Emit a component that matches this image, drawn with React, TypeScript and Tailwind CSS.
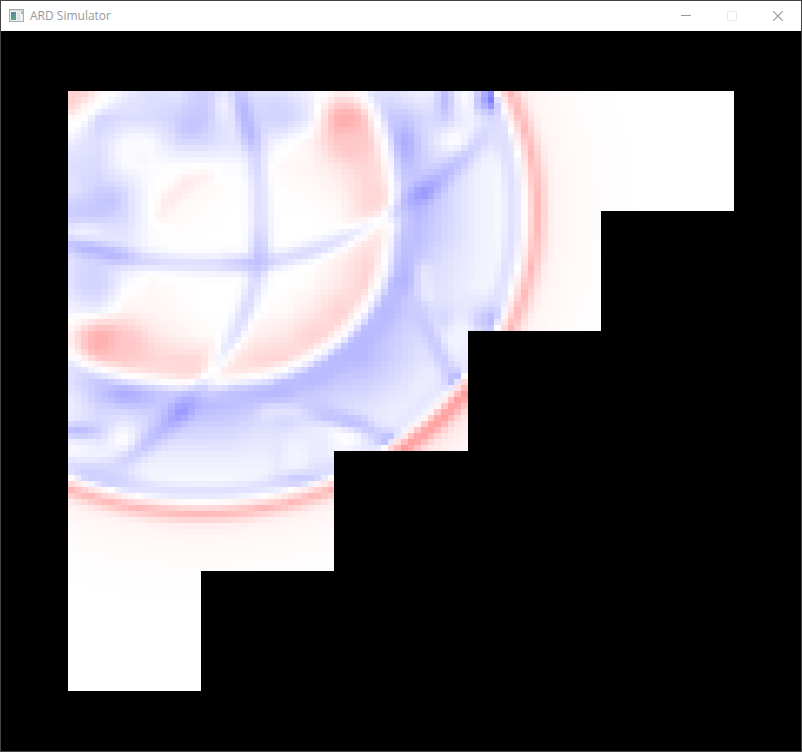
import React from "react";

const CELLS = 100;
const BLOCK = 20;

type Point = [number, number, number];
type Table = { u0: number; v0: number; rows: number[][] };

// Pressure behind the reflected front, sampled every four cells (percent; red > 0 > blue).
const inner: Table = {
  u0: 0,
  v0: 0,
  rows: [
    [16, 3, -8, -13, -11, -20, -9, -11, -10, -5, 6, 5, 0],
    [3, -17, -13, -14, -18, -20, -9, -14, -17, -6, 24, 17, 5],
    [-6, -14, -5, -4, -13, -14, -10, -9, -2, 5, 19, 18, 8],
    [-13, -15, -9, -1, -1, -1, -2, 0, 3, 4, 9, 16, 10],
    [-14, -18, -13, -1, 3, 2, 1, 0, 1, 2, 5, 14, 12],
    [-16, -20, -13, -1, 3, 1, 0, 0, 0, 0, 2, 12, 12],
    [-8, -12, -16, -3, 1, 0, 0, 0, 0, 0, 1, 9, 12],
    [-8, -12, -16, -3, 1, 0, 0, 0, 0, 1, 6, 15, 12],
    [-8, -12, -16, -3, 1, 0, 0, 0, 0, 2, 9, 17, 12],
    [-8, -12, -16, -3, 1, 0, 0, 1, 2, 8, 17, 14, 12],
    [-8, -12, -16, -3, 1, 0, 0, 8, 10, 17, 14, 12, 12],
    [-8, -12, -16, -3, 1, 0, 0, 16, 16, 14, 12, 12, 12],
  ],
};

// Pressure between the reflected front and the leading front.
const outer: Table = {
  u0: 44,
  v0: 0,
  rows: [
    [-12, -13, -7, -8, -4, -7, -8],
    [-14, -21, -16, -13, -5, -7, -8],
    [-16, -20, -19, -6, -4, -10, -9],
    [-16, -18, -20, -14, -7, -3, -7],
    [-16, -17, -25, -17, -8, -3, -5],
    [-16, -17, -27, -17, -8, -3, -4],
    [-16, -17, -25, -16, -8, -3, -4],
    [-18, -18, -21, -12, -7, -3, -5],
    [-22, -22, -18, -11, -6, -2, -5],
    [-24, -25, -18, -9, -10, -14, -12],
    [-26, -21, -14, -7, -4, -12, -12],
    [-27, -19, -12, -7, -5, -8, -8],
    [-20, -14, -8, -5, -5, -8, -8],
    [-14, -9, -6, -4, -5, -8, -8],
    [-12, -8, -5, -5, -5, -8, -8],
  ],
};

type Stroke = { width: number; alpha: number; points: Point[] };

const strokes: Stroke[] = [
  { width: 1, alpha: 0.9, points: [[6.5, 0, -1], [4, 2.3, 0], [2.3, 4, 0]] },
  { width: 1.4, alpha: 0.85, points: [[20, 0, -19], [19.8, 3, -21], [18.4, 6.2, -24]] },
  { width: 1, alpha: 0.9, points: [[16.6, 16.8, 8], [18.2, 15.2, 9], [20.5, 14.2, 6]] },
  { width: 1.1, alpha: 0.95, points: [[25.2, -1, -19], [26.4, 3, -32], [27.4, 7, -30], [28.2, 11, -17], [28.7, 16, -13], [28.9, 22, -13], [28.7, 28.6, -26]] },
  { width: 1, alpha: 0.9, points: [[28.7, 28.6, -24], [32, 28.1, -15], [36, 26.9, -16], [40, 25.3, -14], [43.5, 23.4, -9], [46, 22, -4], [48.5, 20.5, -3]] },
  { width: 1.2, alpha: 0.9, points: [[50, 20, -22], [52, 18.3, -35], [53.4, 17, -42], [56, 14.5, -30], [58.5, 12, -25], [60.5, 9.8, -21], [62.5, 7.3, -16], [64.2, 5, -13]] },
  { width: 1.1, alpha: 0.9, points: [[50.5, 5, -23], [50.6, 8, -34], [50.8, 10.5, -31], [51, 14, -22]] },
  { width: 1.1, alpha: 0.8, points: [[50.7, 25, -25], [50.6, 31, -31], [49.5, 34, -26]] },
  { width: 1, alpha: 0.8, points: [[53.7, 30, -8], [54, 34, -6]] },
  { width: 1, alpha: 0.95, points: [[51.5, 35.5, -20], [53.5, 39, -21], [55.2, 42.3, -22], [57, 46, -22], [58, 48, -29]] },
];

type Blob = [number, number, number, number, number];

// u, v, radius u, radius v, value
const blobs: Blob[] = [
  [1, 0.5, 1.8, 1.4, 18],
  [23.3, 2.5, 0.9, 2, -6],
  [10.2, 9, 1.8, 1.4, -1],
  [31.3, 3.4, 2.6, 2, -17],
  [41.9, 5.1, 1.9, 2, 33],
  [42.6, 9.2, 1.8, 2, 22],
  [46, 18, 1.4, 1.8, 16],
  [56.6, 1.5, 0.9, 2.4, -27],
  [60, 1, 0.9, 1.5, -2],
  [58, 8.2, 1.3, 1.2, -1],
];

// Wall contacts drawn over the blue rim of the leading front, right of the diagonal.
const rightContacts: Blob[] = [
  [61.8, 1.8, 0.7, 1.6, -22],
  [63.4, 1.3, 0.8, 1.5, -52],
  [56.6, 37.8, 1, 1.6, -17],
  [61.7, 38.2, 1, 1.2, -18],
  [63.5, 38.2, 0.9, 1.3, -27],
  [58.5, 41.5, 1.4, 2, -5],
  [58, 47.9, 1, 1.2, -27],
];

// The same below the diagonal, with u and v in screen order.
const lowerContacts: Blob[] = [
  [3.5, 64, 2.2, 1.5, -19],
  [6.5, 65, 2.2, 1, -18],
  [31.6, 59.5, 0.9, 4, -11],
  [33.2, 55.2, 1.9, 1.1, -16],
  [37.5, 57, 2, 1.5, -8],
  [34.5, 61, 1.6, 2.2, -4],
  [35, 64.8, 2.6, 0.9, -21],
  [40.3, 56.6, 1.4, 0.9, -2],
  [42, 58, 1.4, 1.3, 0],
  [39, 54.2, 1.8, 0.8, -23],
  [42.5, 55.2, 1.8, 0.8, -25],
  [48, 58, 1.4, 0.9, -26],
];

const clamp = (x: number, lo: number, hi: number) => Math.max(lo, Math.min(hi, x));

function lookup(t: Table, u: number, v: number) {
  const x = clamp((u - 0.5 - t.u0) / 4, 0, t.rows[0].length - 1.001);
  const y = clamp((v - 0.5 - t.v0) / 4, 0, t.rows.length - 1.001);
  const i = Math.floor(x);
  const j = Math.floor(y);
  const a = x - i;
  const b = y - j;
  const r = t.rows;
  return (r[j][i] * (1 - a) + r[j][i + 1] * a) * (1 - b) + (r[j + 1][i] * (1 - a) + r[j + 1][i + 1] * a) * b;
}

function curve(knots: [number, number][], x: number) {
  if (x <= knots[0][0]) return knots[0][1];
  for (let k = 1; k < knots.length; k++) {
    if (x <= knots[k][0]) {
      const [x0, y0] = knots[k - 1];
      const [x1, y1] = knots[k];
      return y0 + ((y1 - y0) * (x - x0)) / (x1 - x0);
    }
  }
  return knots[knots.length - 1][1];
}

const reflectedRadius: [number, number][] = [[-42, 31], [-25, 29.8], [-3, 28.6], [10, 28.6], [25, 29.2], [45, 29.6]];
const leadingFront: [number, number][] = [[-2, 0], [-1, 13], [0, 28], [1, 17], [2, 7], [3, 4], [6, 2], [11, 0.6], [16, 0]];
const cornerFront: [number, number][] = [[-2, 0], [-1, 22], [0, 40], [1, 28], [2, 13], [3, 8], [6, 3], [9, 2]];

function nearest(points: Point[], u: number, v: number) {
  let best = Infinity;
  let value = 0;
  for (let k = 1; k < points.length; k++) {
    const [x0, y0, p0] = points[k - 1];
    const [x1, y1, p1] = points[k];
    const dx = x1 - x0;
    const dy = y1 - y0;
    const t = clamp(((u - x0) * dx + (v - y0) * dy) / (dx * dx + dy * dy), 0, 1);
    const d = Math.hypot(u - x0 - t * dx, v - y0 - t * dy);
    if (d < best) {
      best = d;
      value = p0 + (p1 - p0) * t;
    }
  }
  return [best, value];
}

function addBlobs(list: Blob[], u: number, v: number, start: number) {
  let p = start;
  for (const [x, y, rx, ry, value] of list) {
    const a = 0.95 * Math.exp(-(((u - x) / rx) ** 2 + ((v - y) / ry) ** 2) / 2);
    p = p * (1 - a) + value * a;
  }
  return p;
}

// The room is nearly symmetric about its diagonal, so the field is described for u >= v.
function pressure(i: number, j: number) {
  const u = Math.max(i, j) + 0.5;
  const v = Math.min(i, j) + 0.5;
  const angle = (Math.atan2(v - 20, u - 20) * 180) / Math.PI;
  const r = Math.hypot(u - 20, v - 20);
  const lead = r - (50.4 - 0.5 * clamp((angle - 25) / 15, 0, 1));
  if (lead > -2) return curve(angle > 30 ? cornerFront : leadingFront, lead);
  const d = u > 20 ? r - curve(reflectedRadius, angle) : -9;
  let p = d < 0 ? lookup(inner, u, v) : lookup(outer, u, v);
  p *= clamp(Math.abs(d) / (d < 0 ? 1.8 : 2), 0, 1);
  if (d > 1.5 && angle > 20) {
    const a = 0.75 * Math.exp(-((d - 3.3) ** 2) / 2.6);
    p = p * (1 - a) - 28 * a;
  }
  for (const s of strokes) {
    const [dist, value] = nearest(s.points, u, v);
    const a = s.alpha * Math.exp(-(dist * dist) / (2 * s.width * s.width));
    p = p * (1 - a) + value * a;
  }
  p = addBlobs(blobs, u, v, p);
  const rim = Math.exp(-((lead + 3.7) ** 2) / 1.4) * 0.85;
  const rimValue = angle > 30 ? 10 : 13;
  p = p * (1 - rim) - rimValue * rim;
  p = i >= j ? addBlobs(rightContacts, u, v, p) : addBlobs(lowerContacts, i + 0.5, j + 0.5, p);
  return p * clamp((-lead - 1.7) / 1, 0, 1);
}

function colour(p: number) {
  const c = Math.round(255 * (1 - clamp(Math.abs(p) / 100, 0, 1)));
  return p < 0 ? `rgb(${c},${c},255)` : `rgb(255,${c},${c})`;
}

const cells: { i: number; j: number; fill: string }[] = [];
for (let j = 0; j < CELLS; j++) {
  const width = CELLS - BLOCK * Math.floor(j / BLOCK);
  for (let i = 0; i < width; i++) cells.push({ i, j, fill: colour(pressure(i, j)) });
}

function AppIcon() {
  return (
    <svg className="h-4 w-4" viewBox="0 0 16 16" shapeRendering="crispEdges" aria-hidden="true">
      <defs>
        <linearGradient id="pane" x1="0" y1="0" x2="0.6" y2="1">
          <stop offset="0" stopColor="#5c7fa6" />
          <stop offset="1" stopColor="#58a585" />
        </linearGradient>
      </defs>
      <rect x="0.5" y="1.5" width="14" height="12" fill="#f1f1f3" stroke="#a9acb1" />
      <rect x="1" y="2" width="13" height="1" fill="#d5d9df" />
      <rect x="2" y="4" width="5" height="8" fill="url(#pane)" />
      <rect x="8" y="4" width="3" height="8" fill="#dfe2e6" />
      <rect x="12" y="3" width="2" height="3" fill="#a7c7b9" />
    </svg>
  );
}

export default function App() {
  return (
    <div className="flex min-h-screen flex-col border border-[#444] bg-black">
      <header className="flex h-[30px] items-center bg-white pl-2">
        <AppIcon />
        <h1 className="ml-[5px] flex-1 font-['Open_Sans','Noto_Sans',sans-serif] text-[12px] leading-4 text-[#999]">ARD Simulator</h1>
        <div className="flex h-full text-[#999]">
          <button type="button" aria-label="Minimize" className="flex w-[46px] items-center justify-center">
            <svg className="h-[10px] w-[10px]" viewBox="0 0 10 10" shapeRendering="crispEdges"><path d="M0 4.5h10" stroke="currentColor" /></svg>
          </button>
          <button type="button" aria-label="Maximize" disabled className="flex w-[46px] items-center justify-center text-[#e8e8e8]">
            <svg className="h-[10px] w-[10px]" viewBox="0 0 10 10" fill="none" shapeRendering="crispEdges"><path d="M.5.5h9v9h-9z" stroke="currentColor" /></svg>
          </button>
          <button type="button" aria-label="Close" className="flex w-[46px] items-center justify-center">
            <svg className="h-[10px] w-[10px]" viewBox="0 0 10 10"><path d="M0 0l10 10M10 0L0 10" stroke="currentColor" strokeWidth="1.2" /></svg>
          </button>
        </div>
      </header>
      <main className="px-[67px] py-[60px]">
        <svg className="block aspect-[111/100] w-full" viewBox="0 0 100 100" preserveAspectRatio="none" shapeRendering="crispEdges" role="img" aria-label="Pressure field">
          {cells.map((c) => (
            <rect key={c.j * CELLS + c.i} x={c.i} y={c.j} width="1" height="1" fill={c.fill} />
          ))}
        </svg>
      </main>
    </div>
  );
}
